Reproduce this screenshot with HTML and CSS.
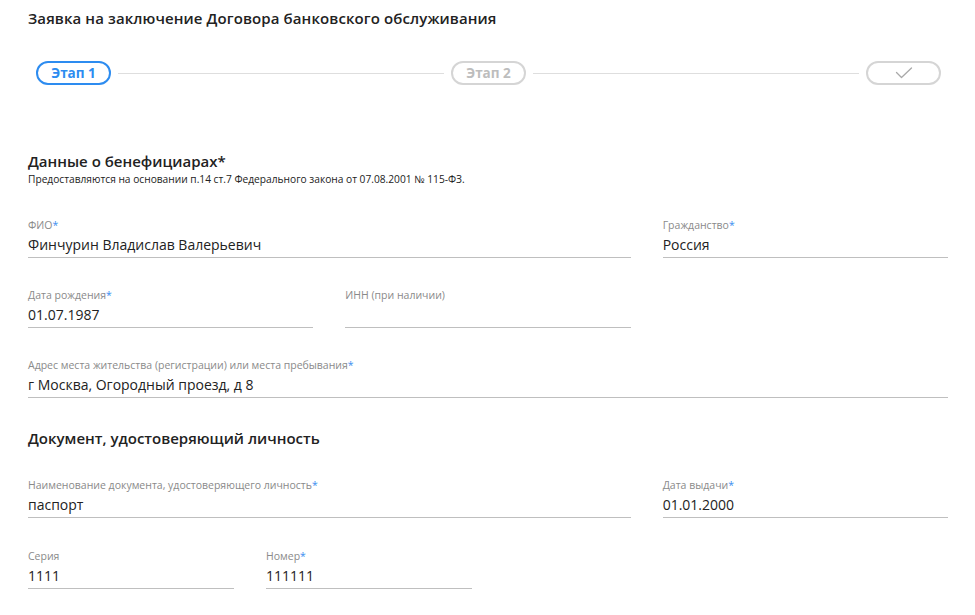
FILE: index.html
```html
<!DOCTYPE html>
<html lang="ru">
<head>
<meta charset="utf-8">
<title>Заявка</title>
<link rel="stylesheet" href="styles.css">
</head>
<body>
<div class="page">
  <h1 class="title">Заявка на заключение Договора банковского обслуживания</h1>

  <div class="stepper">
    <div class="step step-active">Этап 1</div>
    <div class="step-line"></div>
    <div class="step">Этап 2</div>
    <div class="step-line"></div>
    <div class="step step-check">
      <svg width="18" height="12" viewBox="0 0 18 12"><path d="M1.5 5.5 L6.5 10.5 L16.5 1" fill="none" stroke="#a9a9a9" stroke-width="1.3" stroke-linecap="round" stroke-linejoin="round"/></svg>
    </div>
  </div>

  <section class="section section-first">
    <h2 class="section-title">Данные о бенефициарах*</h2>
    <p class="section-note">Предоставляются на основании п.14 ст.7 Федерального закона от 07.08.2001 № 115-ФЗ.</p>

    <div class="grid">
      <div class="field span-8">
        <div class="label">ФИО<span class="req">*</span></div>
        <div class="value">Финчурин Владислав Валерьевич</div>
      </div>
      <div class="field span-4">
        <div class="label">Гражданство<span class="req">*</span></div>
        <div class="value">Россия</div>
      </div>

      <div class="field span-4">
        <div class="label">Дата рождения<span class="req">*</span></div>
        <div class="value">01.07.1987</div>
      </div>
      <div class="field span-4">
        <div class="label">ИНН (при наличии)</div>
        <div class="value"></div>
      </div>

      <div class="field span-12">
        <div class="label">Адрес места жительства (регистрации) или места пребывания<span class="req">*</span></div>
        <div class="value">г Москва, Огородный проезд, д 8</div>
      </div>
    </div>
  </section>

  <section class="section section-doc">
    <h2 class="section-title">Документ, удостоверяющий личность</h2>
    <div class="grid grid-doc">
      <div class="field span-8">
        <div class="label">Наименование документа, удостоверяющего личность<span class="req">*</span></div>
        <div class="value">паспорт</div>
      </div>
      <div class="field span-4">
        <div class="label">Дата выдачи<span class="req">*</span></div>
        <div class="value">01.01.2000</div>
      </div>
      <div class="field span-3">
        <div class="label">Серия</div>
        <div class="value">1111</div>
      </div>
      <div class="field span-3">
        <div class="label">Номер<span class="req">*</span></div>
        <div class="value">111111</div>
      </div>
    </div>
  </section>
</div>
</body>
</html>
```

FILE: styles.css
```css
* { box-sizing: border-box; }
html, body {
  margin: 0;
  padding: 0;
  background: #fff;
}
body {
  font-family: "Open Sans", "Noto Sans", Arial, sans-serif;
  color: #222;
}
.page {
  padding: 8px 27px 0 28px;
}
.title {
  margin: 0;
  font-size: 15px;
  font-weight: 600;
  line-height: 20px;
  letter-spacing: 0.1px;
}
.stepper {
  display: flex;
  align-items: center;
  margin-top: 33px;
  padding: 0 7px 0 8px;
}
.step {
  flex: 0 0 75px;
  height: 24px;
  border: 2px solid #d5d5d5;
  border-radius: 12px;
  display: flex;
  align-items: center;
  justify-content: center;
  font-size: 13.5px;
  font-weight: 700;
  color: #bdbdbd;
}
.step-active {
  border-color: #2d8cf0;
  color: #2d8cf0;
}
.step-line {
  flex: 1;
  height: 1px;
  background: #dedede;
  margin: 0 7px;
}
.section-first {
  margin-top: 66px;
}
.section-doc {
  margin-top: 30px;
}
.section-title {
  margin: 0;
  font-size: 15px;
  font-weight: 600;
  line-height: 20px;
}
.section-note {
  margin: 2px 0 0;
  font-size: 10.2px;
  line-height: 12px;
  color: #222;
}
.grid {
  display: grid;
  grid-template-columns: repeat(12, 1fr);
  column-gap: 32px;
  row-gap: 30px;
  margin-top: 33px;
}
.grid-doc {
  margin-top: 30px;
  row-gap: 31px;
}
.span-3 { grid-column: span 3; }
.span-4 { grid-column: span 4; }
.span-8 { grid-column: span 8; }
.span-12 { grid-column: span 12; }
.span-8 + .span-4 + .span-4 { grid-column: 1 / span 4; }
.field {
  border-bottom: 1px solid #bfbfbf;
  padding-bottom: 2px;
}
.label {
  font-size: 10.5px;
  line-height: 14px;
  color: #8a8a8a;
  white-space: nowrap;
}
.req {
  color: #3b8ef0;
}
.value {
  margin-top: 3px;
  font-size: 14px;
  line-height: 20px;
  height: 20px;
  color: #222;
}
```
